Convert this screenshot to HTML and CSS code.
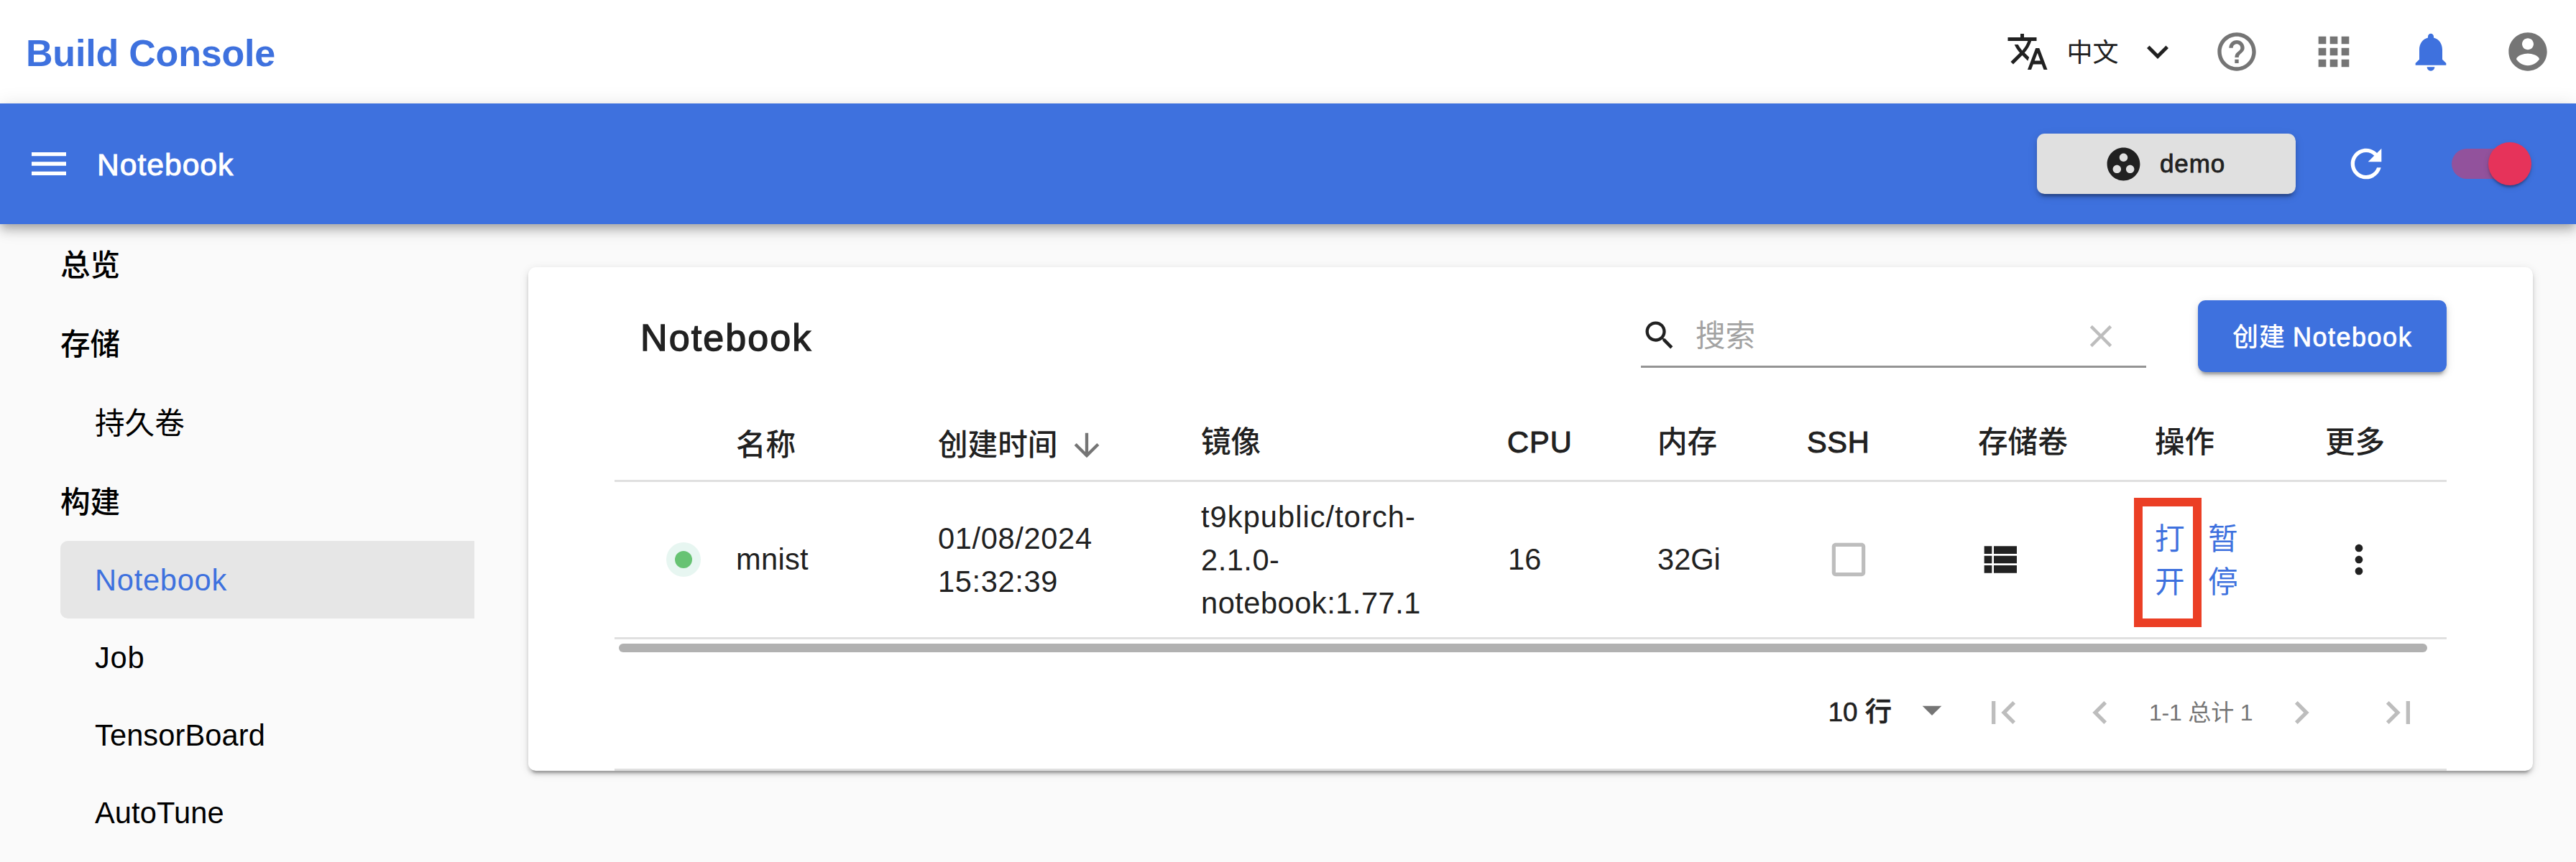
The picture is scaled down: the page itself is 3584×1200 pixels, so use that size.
FILE: index.html
```html
<!DOCTYPE html>
<html lang="zh-CN">
<head>
<meta charset="utf-8">
<title>Build Console</title>
<link rel="stylesheet" href="styles.css">
</head>
<body>
<header class="topbar">
  <div class="brand">Build Console</div>
  <div class="lang">
    <svg class="icon-60" viewBox="0 0 24 24"><path d="M12.87 15.07l-2.54-2.51.03-.03c1.74-1.94 2.98-4.17 3.71-6.53H17V4h-7V2H8v2H1v1.99h11.17C11.5 7.92 10.44 9.75 9 11.35 8.07 10.32 7.3 9.19 6.69 8h-2c.73 1.63 1.73 3.17 2.98 4.56l-5.09 5.02L4 19l5-5 3.11 3.11.76-2.04zM18.5 10h-2L12 22h2l1.12-3h4.75L21 22h2l-4.5-12zm-2.62 7l1.62-4.33L19.12 17h-3.24z"/></svg>
    <span class="lang-name">中文</span>
    <svg class="icon-60" viewBox="0 0 24 24"><path d="M16.59 8.59L12 13.17 7.41 8.59 6 10l6 6 6-6z"/></svg>
  </div>
  <div class="top-action"><svg class="icon-64" viewBox="0 0 24 24"><path d="M11 18h2v-2h-2v2zm1-16C6.48 2 2 6.48 2 12s4.48 10 10 10 10-4.48 10-10S17.52 2 12 2zm0 18c-4.41 0-8-3.59-8-8s3.59-8 8-8 8 3.59 8 8-3.59 8-8 8zm0-14c-2.21 0-4 1.79-4 4h2c0-1.1.9-2 2-2s2 .9 2 2c0 2-3 1.75-3 5h2c0-2.25 3-2.5 3-5 0-2.21-1.79-4-4-4z"/></svg></div>
  <div class="top-action"><svg class="icon-64" viewBox="0 0 24 24"><path d="M4 8h4V4H4v4zm6 12h4v-4h-4v4zm-6 0h4v-4H4v4zm0-6h4v-4H4v4zm6 0h4v-4h-4v4zm6-10v4h4V4h-4zm-6 4h4V4h-4v4zm6 6h4v-4h-4v4zm0 6h4v-4h-4v4z"/></svg></div>
  <div class="top-action top-action-primary"><svg class="icon-64" viewBox="0 0 24 24"><path d="M12 22c1.1 0 2-.9 2-2h-4c0 1.1.89 2 2 2zm6-6v-5c0-3.07-1.64-5.64-4.5-6.32V4c0-.83-.67-1.5-1.5-1.5s-1.5.67-1.5 1.5v.68C7.63 5.36 6 7.92 6 11v5l-2 2v1h16v-1l-2-2z"/></svg></div>
  <div class="top-action"><svg class="icon-64" viewBox="0 0 24 24"><path d="M12 2C6.48 2 2 6.48 2 12s4.48 10 10 10 10-4.48 10-10S17.52 2 12 2zm0 3c1.66 0 3 1.34 3 3s-1.34 3-3 3-3-1.34-3-3 1.34-3 3-3zm0 14.2c-2.5 0-4.71-1.28-6-3.22.03-1.99 4-3.08 6-3.08 1.99 0 5.97 1.09 6 3.08-1.29 1.94-3.5 3.22-6 3.22z"/></svg></div>
</header>

<div class="appbar">
  <svg class="icon-64" viewBox="0 0 24 24"><path d="M3 18h18v-2H3v2zm0-5h18v-2H3v2zm0-7v2h18V6H3z"/></svg>
  <div class="appbar-title">Notebook</div>
  <div class="project">
    <svg class="icon-55" viewBox="0 0 24 24"><path d="M12 2C6.48 2 2 6.48 2 12s4.48 10 10 10 10-4.48 10-10S17.52 2 12 2zM8 17.5c-1.38 0-2.5-1.12-2.5-2.5s1.12-2.5 2.5-2.5 2.5 1.12 2.5 2.5-1.12 2.5-2.5 2.5zM9.5 8c0-1.38 1.12-2.5 2.5-2.5s2.5 1.12 2.5 2.5-1.12 2.5-2.5 2.5S9.5 9.38 9.5 8zm6.5 9.5c-1.38 0-2.5-1.12-2.5-2.5s1.12-2.5 2.5-2.5 2.5 1.12 2.5 2.5-1.12 2.5-2.5 2.5z"/></svg>
    <span>demo</span>
  </div>
  <svg class="icon-64 refresh" viewBox="0 0 24 24"><path d="M17.65 6.35C16.2 4.9 14.21 4 12 4c-4.42 0-7.99 3.58-7.99 8s3.57 8 7.99 8c3.73 0 6.84-2.55 7.73-6h-2.08c-.82 2.33-3.04 4-5.65 4-3.31 0-6-2.69-6-6s2.69-6 6-6c1.66 0 3.14.69 4.22 1.78L13 11h7V4l-2.35 2.35z"/></svg>
  <div class="switch"><div class="switch-track"></div><div class="switch-thumb"></div></div>
</div>

<div class="page">
  <nav class="sidebar">
    <div class="nav-head">总览</div>
    <div class="nav-head">存储</div>
    <div class="nav-item nav-item-cjk">持久卷</div>
    <div class="nav-head">构建</div>
    <div class="nav-item nav-item-active">Notebook</div>
    <div class="nav-item">Job</div>
    <div class="nav-item nav-item-long">TensorBoard</div>
    <div class="nav-item nav-item-tight">AutoTune</div>
  </nav>

  <main class="card">
    <div class="toolbar">
      <h1 class="card-title">Notebook</h1>
      <div class="search">
        <svg class="icon-52" viewBox="0 0 24 24"><path d="M15.5 14h-.79l-.28-.27C15.41 12.59 16 11.11 16 9.5 16 5.91 13.09 3 9.5 3S3 5.91 3 9.5 5.91 16 9.5 16c1.61 0 3.09-.59 4.23-1.57l.27.28v.79l5 4.99L20.49 19l-4.99-5zm-6 0C7.01 14 5 11.99 5 9.5S7.01 5 9.5 5 14 7.01 14 9.5 11.99 14 9.5 14z"/></svg>
        <span class="search-text">搜索</span>
        <svg class="icon-52 search-clear" viewBox="0 0 24 24"><path d="M19 6.41L17.59 5 12 10.59 6.41 5 5 6.41 10.59 12 5 17.59 6.41 19 12 13.41 17.59 19 19 17.59 13.41 12z"/></svg>
      </div>
      <div class="create"><span class="create-cjk">创建</span> <span class="create-latin">Notebook</span></div>
    </div>

    <div class="row row-head">
      <div></div>
      <div class="sortable">名称</div>
      <div class="sortable">创建时间<svg class="icon-52 sort-arrow" viewBox="0 0 24 24"><path d="M20 12l-1.41-1.41L13 16.17V4h-2v12.17l-5.58-5.59L4 12l8 8 8-8z"/></svg></div>
      <div>镜像</div>
      <div class="head-cpu">CPU</div>
      <div>内存</div>
      <div class="head-ssh">SSH</div>
      <div>存储卷</div>
      <div>操作</div>
      <div>更多</div>
    </div>

    <div class="row row-body">
      <div class="status"><div class="status-halo"><div class="status-dot"></div></div></div>
      <div class="cell-name">mnist</div>
      <div class="cell-time">01/08/2024<br>15:32:39</div>
      <div class="cell-image"><span class="image-repo">t9kpublic/torch-</span><br>2.1.0-<br>notebook:1.77.1</div>
      <div class="cell-cpu">16</div>
      <div>32Gi</div>
      <div class="cell-ssh"><svg class="icon-62" viewBox="0 0 24 24"><path d="M19 5v14H5V5h14m0-2H5c-1.1 0-2 .9-2 2v14c0 1.1.9 2 2 2h14c1.1 0 2-.9 2-2V5c0-1.1-.9-2-2-2z"/></svg></div>
      <div class="cell-volume"><svg class="icon-64" viewBox="0 0 24 24"><path d="M4 14h4v-4H4v4zm0 5h4v-4H4v4zM4 9h4V5H4v4zm5 5h12v-4H9v4zm0 5h12v-4H9v4zM9 5v4h12V5H9z"/></svg></div>
      <div class="cell-ops">
        <a class="op op-marked">打<br>开</a>
        <a class="op">暂<br>停</a>
      </div>
      <div class="cell-more"><svg class="icon-64" viewBox="0 0 24 24"><path d="M12 8c1.1 0 2-.9 2-2s-.9-2-2-2-2 .9-2 2 .9 2 2 2zm0 2c-1.1 0-2 .9-2 2s.9 2 2 2 2-.9 2-2-.9-2-2-2zm0 6c-1.1 0-2 .9-2 2s.9 2 2 2 2-.9 2-2-.9-2-2-2z"/></svg></div>
    </div>
    <div class="scrollbar"></div>

    <div class="pager">
      <div class="page-size">10 行</div>
      <svg class="icon-64 page-caret" viewBox="0 0 24 24"><path d="M7 10l5 5 5-5z"/></svg>
      <svg class="icon-64" viewBox="0 0 24 24"><path d="M18.41 16.59L13.82 12l4.59-4.59L17 6l-6 6 6 6zM6 6h2v12H6z"/></svg>
      <svg class="icon-64 page-step" viewBox="0 0 24 24"><path d="M15.41 7.41L14 6l-6 6 6 6 1.41-1.41L10.83 12z"/></svg>
      <div class="page-range">1-1 总计 1</div>
      <svg class="icon-64" viewBox="0 0 24 24"><path d="M10 6L8.59 7.41 13.17 12l-4.58 4.59L10 18l6-6z"/></svg>
      <svg class="icon-64 page-step" viewBox="0 0 24 24"><path d="M5.59 7.41L10.18 12l-4.59 4.59L7 18l6-6-6-6zM16 6h2v12h-2z"/></svg>
    </div>
  </main>
</div>
</body>
</html>
```
FILE: styles.css
```css
:root {
  --primary: #3e71de;
  --ink: #212121;
  --muted: #757575;
  --faint: #bdbdbd;
  --line: #e0e0e0;
  --raised: 0 8px 3px -5px rgba(0, 0, 0, .2), 0 5px 5px 0 rgba(0, 0, 0, .14), 0 3px 13px 0 rgba(0, 0, 0, .12);
}

*, *::before, *::after { box-sizing: border-box; }

body {
  margin: 0;
  height: 1200px;
  overflow: hidden;
  background: #fafafa;
  color: var(--ink);
  font-family: "Liberation Sans", "Noto Sans CJK SC", sans-serif;
  font-size: 41.6px;
  line-height: 60px;
}

svg { display: block; flex: none; fill: currentColor; }
.icon-52 { width: 52px; height: 52px; }
.icon-55 { width: 55px; height: 55px; }
.icon-60 { width: 60px; height: 60px; }
.icon-62 { width: 62px; height: 62px; }
.icon-64 { width: 64px; height: 64px; }

/* top bar */
.topbar {
  display: flex;
  align-items: center;
  height: 144px;
  padding-left: 36px;
  background: #fff;
}
.brand {
  margin-right: auto;
  color: var(--primary);
  font-size: 52px;
  font-weight: 700;
  letter-spacing: -.2px;
  padding-top: 3px;
}
.lang { display: flex; align-items: center; gap: 24.5px; margin-right: 12px; }
.lang-name { font-size: 36px; width: 72px; padding-top: 4px; }
.top-action { display: flex; justify-content: center; width: 135px; color: var(--muted); }
.top-action-primary { color: var(--primary); }

/* app bar */
.appbar {
  position: relative;
  display: flex;
  align-items: center;
  height: 168px;
  padding: 0 62px 0 36px;
  background: var(--primary);
  color: #fff;
  box-shadow: 0 5px 11px -3px rgba(0, 0, 0, .2), 0 11px 13px 0 rgba(0, 0, 0, .14), 0 3px 27px 0 rgba(0, 0, 0, .12);
}
.appbar-title {
  margin: 2px auto 0 35px;
  font-size: 42.6px;
  letter-spacing: 1px;
  -webkit-text-stroke: 1px;
}
.project {
  display: flex;
  align-items: center;
  gap: 23.5px;
  width: 360px;
  height: 84px;
  padding-left: 92.5px;
  border-radius: 10.6px;
  background: #e0e0e0;
  color: var(--ink);
  font-size: 35px;
  letter-spacing: .9px;
  -webkit-text-stroke: .8px;
  box-shadow: var(--raised);
}
.project svg { stroke: none; }
.refresh { margin: 0 86.5px 0 66px; }
.switch { position: relative; width: 111.5px; height: 60px; }
.switch-track {
  position: absolute;
  left: 0;
  top: 9px;
  width: 102px;
  height: 42px;
  border-radius: 21px;
  background: #92529c;
}
.switch-thumb {
  position: absolute;
  right: 0;
  top: 0;
  width: 60px;
  height: 60px;
  border-radius: 50%;
  background: #e6335a;
  box-shadow: 0 5px 3px -3px rgba(0, 0, 0, .2), 0 3px 3px 0 rgba(0, 0, 0, .14), 0 3px 8px 0 rgba(0, 0, 0, .12);
}

/* page */
.page { display: flex; align-items: flex-start; }
.sidebar { width: 660px; padding: 1px 0 0 84px; color: #000; }
.nav-head { display: flex; align-items: center; height: 110px; padding-top: 3px; font-weight: 500; }
.nav-item {
  display: flex;
  align-items: center;
  height: 108px;
  padding: 1px 0 0 48px;
  letter-spacing: .75px;
}
.nav-item-cjk { height: 110px; padding-top: 3px; letter-spacing: 0; }
.nav-item-long { letter-spacing: .1px; }
.nav-item-tight { letter-spacing: .1px; }
.nav-item-active {
  border-radius: 10.6px 0 0 10.6px;
  background: #e6e6e6;
  color: var(--primary);
}

.card {
  width: 2789px;
  margin: 60px 0 0 75px;
  padding: 0 120px;
  border-radius: 10.6px;
  background: #fff;
  box-shadow: var(--raised);
}
.toolbar { display: flex; align-items: center; height: 192px; padding-left: 36px; }
.card-title {
  margin: 3px auto 0 0;
  font-size: 52px;
  font-weight: 400;
  letter-spacing: 2.1px;
  -webkit-text-stroke: 1.4px;
}
.search {
  display: flex;
  align-items: center;
  width: 703px;
  height: 88px;
  margin-right: 72px;
  border-bottom: 3px solid #949494;
}
.search-text { margin: 2px 0 0 24px; color: #a2a2a2; }
.search-clear { margin: 2px 37px 0 auto; color: var(--faint); }
.create {
  width: 346px;
  height: 100px;
  padding-left: 48px;
  border-radius: 10.6px;
  background: var(--primary);
  color: #fff;
  font-size: 36px;
  line-height: 103px;
  white-space: nowrap;
  box-shadow: var(--raised);
}
.create-cjk { font-weight: 500; letter-spacing: 1px; }
.create-latin { letter-spacing: 1.5px; -webkit-text-stroke: .8px; }

/* table */
.row {
  display: grid;
  grid-template-columns: 169px 281px 366px 425px 210px 208px 238px 246px 237px 169px;
  align-items: center;
  border-bottom: 3px solid var(--line);
}
.row-head { height: 107px; font-weight: 500; }
.row-head > div { margin-top: 0; }
.row-head > .sortable { display: flex; align-items: center; margin-top: 7px; }
.sort-arrow { margin-left: 15px; color: var(--muted); }
.row-head .head-cpu, .row-head .head-ssh { margin-top: -1px; font-weight: 400; -webkit-text-stroke: 1px; letter-spacing: 1.2px; }
.row-head .head-cpu { padding-left: 1px; letter-spacing: 1px; }
.row-head .head-ssh { letter-spacing: .6px; }

.row-body { height: 219px; }
.row-body > .cell-time, .row-body > .cell-image { padding-top: 1px; }
.status { padding-left: 72px; }
.status-halo {
  display: flex;
  align-items: center;
  justify-content: center;
  width: 48px;
  height: 48px;
  border-radius: 50%;
  background: #e7f6f1;
}
.status-dot { width: 24px; height: 24px; border-radius: 50%; background: #67c373; }
.cell-name { letter-spacing: .3px; }
.cell-time { letter-spacing: .65px; }
.cell-image { letter-spacing: .5px; }
.image-repo { letter-spacing: 1.05px; }
.cell-cpu { padding-left: 2px; }
.cell-ssh { padding-left: 27px; color: var(--faint); }
.cell-volume { margin-left: -2px; color: var(--ink); }
.cell-more { padding-left: 15px; }
.cell-ops { display: flex; gap: 32px; padding-top: 3px; }
.op { position: relative; width: 42px; color: var(--primary); }
.op-marked::after {
  content: "";
  position: absolute;
  left: -29px;
  top: -28px;
  width: 94px;
  height: 180px;
  border: 12px solid #eb3f25;
}

.scrollbar {
  width: 2516px;
  height: 12px;
  margin: 6px 0 0 6px;
  border-radius: 6px;
  background: #b1b1b1;
}

/* pager */
.pager {
  display: flex;
  align-items: center;
  justify-content: flex-end;
  height: 165px;
  padding: 5px 35.5px 0 0;
  border-bottom: 3px solid var(--line);
  color: var(--faint);
}
.page-size { width: 89px; color: var(--ink); font-size: 37px; font-weight: 500; white-space: nowrap; -webkit-text-stroke: .6px; }
.page-caret { margin: 0 35px 7px 23px; color: var(--muted); }
.page-step { margin-left: 71px; }
.page-range { width: 142px; margin: 0 37.5px 0 36.5px; color: var(--muted); font-size: 32px; letter-spacing: -.2px; white-space: nowrap; }
```
